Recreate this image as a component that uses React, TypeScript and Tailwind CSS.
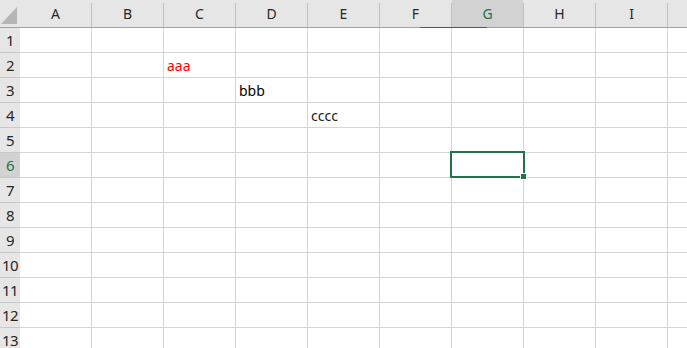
import React from "react";

const columnas = ["A", "B", "C", "D", "E", "F", "G", "H", "I", ""];
const filas = Array.from({ length: 13 }, (_, i) => i + 1);

const celdas: Record<string, { texto: string; color: string }> = {
  "2-C": { texto: "aaa", color: "text-[#ff0000]" },
  "3-D": { texto: "bbb", color: "text-[#000000]" },
  "4-E": { texto: "cccc", color: "text-[#1a1a1a]" },
};

const fuente = { fontFamily: '"Noto Sans", "Noto Sans CJK JP", sans-serif' };

function Esquina() {
  return (
    <div className="relative h-[27px] w-[20px] shrink-0 bg-[#e6e6e6]">
      <svg width="20" height="27" className="absolute left-0 top-0">
        <polygon points="1,24 17,24 17,7" fill="#b5b5b5" />
      </svg>
    </div>
  );
}

function Encabezado({ letra, activa }: { letra: string; activa: boolean }) {
  return (
    <div className="flex h-[27px] w-[72px] shrink-0">
      <div
        className={
          activa
            ? "flex w-[71px] items-center justify-center bg-[#d2d2d2] text-[14px] text-[#217346]"
            : "flex w-[71px] items-center justify-center bg-[#e6e6e6] text-[14px] text-[#262626]"
        }
      >
        {letra}
      </div>
      <div className="w-px bg-[#e6e6e6]">
        <div className="mt-[3px] h-[24px] w-px bg-[#c0c0c0]" />
      </div>
    </div>
  );
}

export default function App() {
  return (
    <div className="h-[348px] w-[687px] overflow-hidden bg-white" style={fuente}>
      {/* encabezado de columnas */}
      <div className="flex">
        <Esquina />
        <div className="w-px bg-[#c0c0c0]" />
        {columnas.map((c) => (
          <Encabezado key={c || "J"} letra={c} activa={c === "G"} />
        ))}
      </div>
      <div className="flex h-px">
        <div className="w-[20px] bg-[#a0a0a0]" />
        <div className="w-px bg-[#a0a0a0]" />
        {columnas.map((c) => (
          <div key={c || "J"} className={c === "G" ? "w-[72px] bg-[#217346]" : "w-[72px] bg-[#a0a0a0]"} />
        ))}
      </div>

      {filas.map((f) => (
        <div key={f} className="flex">
          <div
            className={
              f === 6
                ? "flex h-[25px] w-[20px] shrink-0 items-center justify-center border-b border-[#c8c8c8] bg-[#d2d2d2] text-[15px] tracking-[-0.5px] text-[#217346]"
                : "flex h-[25px] w-[20px] shrink-0 items-center justify-center border-b border-[#c8c8c8] bg-[#e6e6e6] text-[15px] tracking-[-0.5px] text-[#262626]"
            }
          >
            {f}
          </div>
          <div className={f === 6 ? "w-px bg-[#217346]" : "w-px bg-[#a0a0a0]"} />
          {columnas.map((c) => {
            const celda = celdas[`${f}-${c}`];
            const activa = f === 6 && c === "G";
            return (
              <div
                key={c || "J"}
                className="relative flex h-[25px] w-[72px] shrink-0 items-end border-b border-r border-[#d4d4d4] px-[3px] pb-[1px]"
              >
                {celda && (
                  <span className={`whitespace-nowrap text-[14px] leading-[20px] ${celda.color}`}>
                    {celda.texto}
                  </span>
                )}
                {activa && (
                  <div className="absolute -left-[2px] -top-[2px] z-10 h-[27px] w-[75px] border-2 border-[#217346]">
                    <div className="absolute left-[68px] top-[20px] h-[7px] w-[7px] border border-white bg-[#217346]" />
                  </div>
                )}
              </div>
            );
          })}
        </div>
      ))}
    </div>
  );
}
